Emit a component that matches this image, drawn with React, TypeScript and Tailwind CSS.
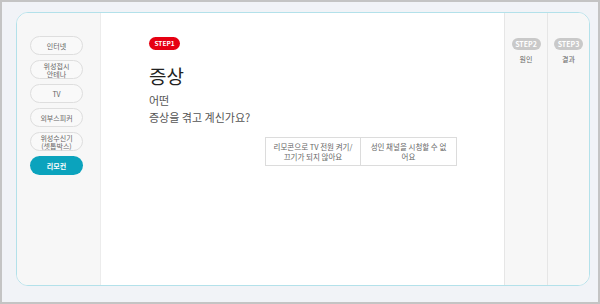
import React from "react";

const MENU = ["인터넷", "위성접시\n안테나", "TV", "외부스피커", "위성수신기\n(셋톱박스)", "리모컨"];
const ACTIVE = "리모컨";

const OPTIONS = ["리모콘으로 TV 전원 켜기/\n끄기가 되지 않아요", "성인 채널을 시청할 수 없\n어요"];

function Badge({ label, active }: { label: string; active?: boolean }) {
  return (
    <span
      className={
        active
          ? "inline-flex h-[13px] w-[31px] items-center justify-center rounded-full bg-[#e60012] text-[6.5px] font-bold text-white"
          : "inline-flex h-[12px] w-[29px] items-center justify-center rounded-full bg-[#c9c9c9] text-[7px] font-bold text-white"
      }
    >
      {label}
    </span>
  );
}

export default function App() {
  return (
    <div
      className="h-[304px] w-[600px] border-2 border-[#c4c4c4] bg-[#f1f3f7] pl-[14px] pt-[10px]"
      style={{ fontFamily: '"Noto Sans CJK KR", "Noto Sans", sans-serif' }}
    >
      <div className="flex h-[274px] w-[574px] overflow-hidden rounded-[12px] border border-[#b3e1ea] bg-white">
        {/* sidebar */}
        <aside className="flex w-[84px] shrink-0 flex-col gap-[5px] border-r border-[#ececec] bg-[#f7f7f7] pl-[13px] pt-[23px]">
          {MENU.map((m) => {
            const on = m === ACTIVE;
            return (
              <div
                key={m}
                className={
                  on
                    ? "flex h-[19px] w-[53px] items-center justify-center rounded-full bg-[#0ba3bd] text-center text-[7px] leading-[8px] font-bold whitespace-pre-line text-white"
                    : "flex h-[19px] w-[53px] items-center justify-center rounded-full border border-[#dedede] bg-[#f9f9f9] text-center text-[7px] leading-[8px] whitespace-pre-line text-[#666]"
                }
              >
                {m}
              </div>
            );
          })}
        </aside>

        {/* main */}
        <main className="flex w-[403px] shrink-0 flex-col pl-[48px] pr-[47px] pt-[24px]">
          <div className="flex">
            <Badge label="STEP1" active />
          </div>
          <h1 className="mt-[14px] text-[19px] leading-[24px] font-normal text-[#222]">증상</h1>
          <p className="mt-[4px] text-[11px] leading-[17px] text-[#555]">
            어떤
            <br />
            증상을 겪고 계신가요?
          </p>
          <div className="mt-[11px] flex justify-end">
            {OPTIONS.map((o, i) => (
              <div
                key={o}
                className={
                  "flex h-[29px] w-[96px] items-center justify-center border border-[#dcdcdc] bg-white text-center text-[7.5px] leading-[10px] whitespace-pre-line text-[#666]" +
                  (i > 0 ? " border-l-0" : "")
                }
              >
                {o}
              </div>
            ))}
          </div>
        </main>

        {/* steps */}
        <div className="flex w-[43px] shrink-0 flex-col items-center border-l border-[#e6e6e6] bg-[#f7f7f7] pt-[25px]">
          <Badge label="STEP2" />
          <span className="mt-[4px] text-[7px] text-[#666]">원인</span>
        </div>
        <div className="flex flex-1 flex-col items-center border-l border-[#e6e6e6] bg-[#f7f7f7] pt-[25px]">
          <Badge label="STEP3" />
          <span className="mt-[4px] text-[7px] text-[#666]">결과</span>
        </div>
      </div>
    </div>
  );
}
